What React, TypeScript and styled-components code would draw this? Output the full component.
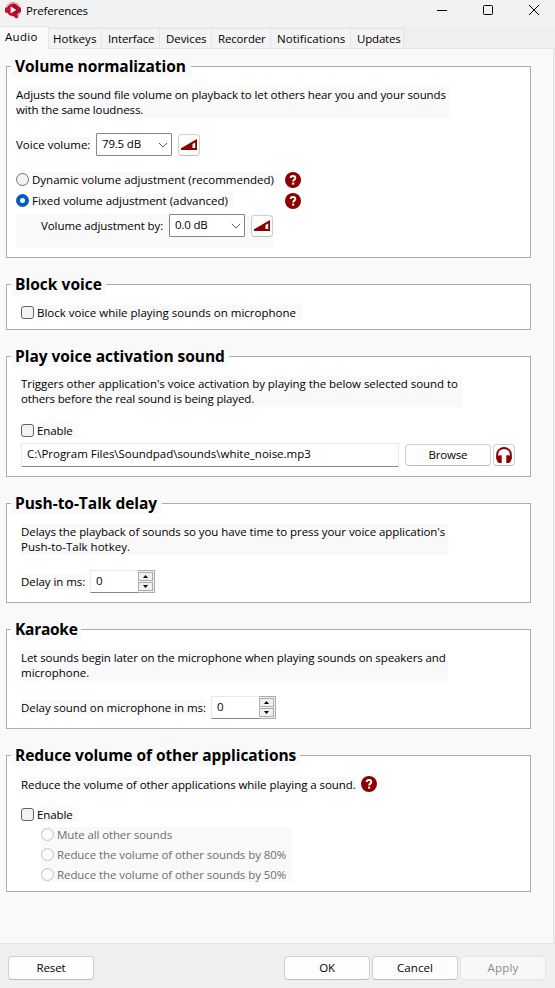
import React from 'react';
import styled, { createGlobalStyle } from 'styled-components';

const Global = createGlobalStyle`
  * { box-sizing: border-box; }
  body {
    margin: 0;
    background: #efefef;
    color: #000;
    font: 11.5px/15px "Open Sans", "Noto Sans", sans-serif;
  }
  button, input { font: inherit; color: inherit; }
`;

const Window = styled.div`
  display: flex;
  flex-direction: column;
  width: 555px;
  height: 988px;
  background: #efefef;
  overflow: hidden;
`;

const TitleBar = styled.header`
  display: flex;
  align-items: flex-start;
  height: 26px;
  padding: 2px 0 0 5px;
  background: #f2f2f2;
`;

const WindowTitle = styled.span`
  flex: 1;
  margin: 1px 0 0 5px;
  letter-spacing: -0.2px;
`;

const CaptionIcon = styled.svg`
  display: block;
  width: 12px;
  height: 12px;
  margin: 2px 15px 0 19px;
  fill: none;
  stroke: #000;
`;

const TabBar = styled.nav`
  display: flex;
  align-items: flex-end;
  height: 22px;
`;

const Tab = styled.div<{ $width: number; $active?: boolean; $spacing?: number }>`
  position: relative;
  width: ${(p) => p.$width}px;
  height: ${(p) => (p.$active ? 23 : 20)}px;
  margin-bottom: ${(p) => (p.$active ? -1 : 0)}px;
  padding: 2px 0 0 5px;
  border: solid #e5e5e5;
  border-width: ${(p) => (p.$active ? '1px 0 0 0' : '1px 1px 0 0')};
  background: ${(p) => (p.$active ? '#f9f9f9' : '#f3f3f3')};
  letter-spacing: ${(p) => p.$spacing ?? 0}px;
  white-space: nowrap;
  &:nth-child(2) { border-left-width: 1px; padding-left: 4px; }
  &:nth-child(n + 3) { padding-left: 6px; }
`;

const TabPage = styled.main`
  display: flex;
  flex-direction: column;
  gap: 26px;
  height: 896px;
  margin-right: 1px;
  padding: 17px 0 0 6px;
  border: solid #e3e3e3;
  border-width: 1px 1px 1px 0;
  background: #f9f9f9;
`;

const Group = styled.section<{ $height: number; $inset?: number }>`
  flex: none;
  width: 525px;
  height: ${(p) => p.$height}px;
  padding-left: ${(p) => p.$inset ?? 14}px;
  border: 1px solid #acacac;
  background: #fff;
`;

const Heading = styled.h2<{ $width: number; $inset?: number; $spacing?: number }>`
  width: ${(p) => p.$width}px;
  height: 17px;
  margin: -7px 0 0 ${(p) => 4 - (p.$inset ?? 14)}px;
  padding-left: 4px;
  background: #f9f9f9;
  font-size: 15.5px;
  line-height: 13px;
  font-weight: 700;
  letter-spacing: ${(p) => p.$spacing ?? -0.03}px;
  white-space: nowrap;
`;

const Row = styled.div<{ $top?: number; $height?: number }>`
  display: flex;
  align-items: center;
  height: ${(p) => p.$height ?? 15}px;
  margin-top: ${(p) => p.$top ?? 0}px;
`;

const Label = styled.span<{ $spacing?: number; $width?: number; $disabled?: boolean }>`
  flex: none;
  display: block;
  width: ${(p) => (p.$width ? `${p.$width}px` : 'auto')};
  background: #f9f9f9;
  color: ${(p) => (p.$disabled ? '#6d6d6d' : '#000')};
  letter-spacing: ${(p) => p.$spacing ?? 0}px;
  white-space: nowrap;
`;

const Note = styled.div<{ $top: number; $width: number }>`
  width: ${(p) => p.$width}px;
  height: 31px;
  margin-top: ${(p) => p.$top}px;
  background: #f9f9f9;
`;

const ComboBox = styled.div`
  display: flex;
  align-items: center;
  justify-content: space-between;
  flex: none;
  width: 76px;
  height: 23px;
  padding: 0 3px 2px 5px;
  border: 1px solid #868686;
  border-radius: 1px;
  background: #fff;
  letter-spacing: -0.19px;
`;

const Chevron = styled.svg`
  width: 10px;
  height: 6px;
  margin-top: 3px;
  fill: none;
  stroke: #5e5e5e;
`;

const IconButton = styled.button`
  display: flex;
  align-items: center;
  justify-content: center;
  flex: none;
  width: 22px;
  height: 22px;
  padding: 0;
  border: 1px solid #d0d0d0;
  border-bottom-color: #bcbcbc;
  border-radius: 4px;
  background: #fdfdfd;
`;

const PushButton = styled.button<{ $height?: number; $spacing?: number }>`
  flex: none;
  width: 86px;
  height: ${(p) => p.$height ?? 24}px;
  padding: 0 0 1px;
  border: 1px solid #d0d0d0;
  border-bottom-color: #bcbcbc;
  border-radius: 4px;
  background: #fdfdfd;
  letter-spacing: ${(p) => p.$spacing ?? -0.15}px;
  &:disabled {
    border-color: #e6e6e6;
    background: #f7f7f7;
    color: #8b8b8b;
  }
`;

const Radio = styled.span<{ $checked?: boolean; $disabled?: boolean }>`
  flex: none;
  width: 13px;
  height: 13px;
  margin-right: 3px;
  border: ${(p) => (p.$checked ? '4px solid #005fb8' : `1px solid ${p.$disabled ? '#c3c3c3' : '#707070'}`)};
  border-radius: 50%;
  background: ${(p) => (p.$checked ? '#fff' : p.$disabled ? '#fbfbfb' : '#f3f3f3')};
`;

const Check = styled.span`
  flex: none;
  width: 13px;
  height: 13px;
  margin-right: 3px;
  border: 1px solid #626262;
  border-radius: 3px;
  background: #f3f3f3;
`;

const Indented = styled.div<{ $width: number; $height: number; $top: number; $left?: number }>`
  width: ${(p) => p.$width}px;
  height: ${(p) => p.$height}px;
  margin: ${(p) => p.$top}px 0 0 ${(p) => p.$left ?? 0}px;
  background: #f9f9f9;
`;

const Gap = styled.span<{ $width: number }>`
  flex: none;
  width: ${(p) => p.$width}px;
`;

const PathField = styled.div`
  width: 378px;
  height: 24px;
  margin-right: 6px;
  padding: 2px 5px;
  border: 1px solid #e9e9e9;
  border-bottom-color: #868686;
  border-radius: 1px;
  background: #fff;
  letter-spacing: -0.02px;
`;

const SpinBox = styled.div`
  display: flex;
  width: 65px;
  height: 23px;
  background: #fff;
`;

const SpinValue = styled.span`
  width: 48px;
  padding: 2px 5px;
  border: 1px solid #e9e9e9;
  border-right: 0;
  border-bottom-color: #868686;
`;

const SpinArrows = styled.span`
  display: flex;
  flex-direction: column;
  justify-content: space-between;
  width: 17px;
  padding: 1px 1px 1px 0;
  border: 1px solid #acacac;
  border-left: 0;
  background: #f0f0f0;
`;

const SpinArrow = styled.svg`
  display: block;
  width: 15px;
  height: 9px;
  border: 1px solid #acacac;
  background: #f0f0f0;
`;

const Footer = styled.footer`
  display: flex;
  gap: 2px;
  padding: 12px 9px 0 8px;
`;

const Spacer = styled.span`
  flex: 1;
`;

const HelpSvg = styled.svg`
  flex: none;
  display: block;
  width: 16px;
  height: 16px;
`;

const HelpIcon = () => (
  <HelpSvg viewBox="0 0 16 16">
    <circle cx="8" cy="8" r="8" fill="#8b0000" />
    <path d="M5.7 6.1C5.7 4.7 6.600 4 8 4s2.300.8 2.300 2c0 1.600-2.100 1.700-2.100 3.400" fill="none" stroke="#fff" strokeWidth="2" />
    <rect x="7.1" y="10.6" width="2.1" height="2" fill="#fff" />
  </HelpSvg>
);

const VolumeIcon = () => (
  <svg width="16" height="11" viewBox="0 0 16 11">
    <path fill="#8b0000" fillRule="evenodd" d="M0 9.300 16 0V11H0ZM11.500 9H14.200V3.400L11.500 5Z" />
  </svg>
);

const HeadphonesIcon = () => (
  <svg width="16" height="16" viewBox="0 0 16 16">
    <path d="M1.200 12V7.400a6.800 6.400 0 0 1 13.600 0V12" fill="none" stroke="#8b0000" strokeWidth="2" />
    <path d="M.4 10.500C.4 8.600 3 8 5.700 8.200V16H3.600C1.400 15.600.4 13.500.4 10.500ZM15.600 10.500c0-1.900-2.600-2.500-5.300-2.300V16h2.100c2.200-.4 3.200-2.500 3.200-5.500Z" fill="#8b0000" />
  </svg>
);

const AppIcon = () => (
  <svg width="16" height="17" viewBox="0 0 16 17">
    <path d="M1 7C1.600 2.500 5 .4 8.300.5 12 .6 14.600 3 15 6.500" fill="none" stroke="#d98089" strokeWidth="1" />
    <circle cx="8" cy="7.900" r="6.300" fill="#c8102e" />
    <path d="M8 1.600A6.300 6.300 0 0 1 9 14.100Z" fill="#a50d25" />
    <rect x="0" y="5.500" width="3.200" height="5.500" rx="1.400" fill="#c8102e" />
    <rect x="13" y="5.200" width="3" height="5.600" rx="1.400" fill="#b00d27" />
    <path d="M14.600 10.500C14 13.500 12.500 14.800 10 15.400" fill="none" stroke="#b56069" />
    <path d="M8.500 14.200 12.500 12.800 13.200 15.700 11 16.300Z" fill="#bd1029" />
    <path d="M5.700 4.600 11.400 7.900 5.700 11.200Z" fill="#fff" />
  </svg>
);

const Combo = ({ value }: { value: string }) => (
  <ComboBox>
    {value}
    <Chevron viewBox="0 0 10 6"><path d="M.8.8 5 5 9.200.8" /></Chevron>
  </ComboBox>
);

const Spinner = ({ value }: { value: number }) => (
  <SpinBox>
    <SpinValue>{value}</SpinValue>
    <SpinArrows>
      <SpinArrow viewBox="0 0 13 7"><path d="M4 5 6.500 2 9 5Z" /></SpinArrow>
      <SpinArrow viewBox="0 0 13 7"><path d="M4 2 6.500 5 9 2Z" /></SpinArrow>
    </SpinArrows>
  </SpinBox>
);

const tabs: [string, number, number][] = [
  ['Audio', 48, 0.3],
  ['Hotkeys', 54, 0.02],
  ['Interface', 58, -0.15],
  ['Devices', 52, -0.06],
  ['Recorder', 59, -0.16],
  ['Notifications', 80, 0.05],
  ['Updates', 53, -0.19],
];

export default function App() {
  return (
    <Window>
      <Global />
      <TitleBar>
        <AppIcon />
        <WindowTitle>Preferences</WindowTitle>
        <CaptionIcon viewBox="0 0 12 12"><path d="M1 6.500H11" /></CaptionIcon>
        <CaptionIcon viewBox="0 0 12 12"><rect x="1.500" y="1.500" width="9" height="9" rx="1" /></CaptionIcon>
        <CaptionIcon viewBox="0 0 12 12"><path d="M1 1 11 11M11 1 1 11" /></CaptionIcon>
      </TitleBar>
      <TabBar>
        {tabs.map(([name, width, spacing], i) => (
          <Tab key={name} $width={width} $spacing={spacing} $active={i === 0}>{name}</Tab>
        ))}
      </TabBar>
      <TabPage>
        <Group $height={192} $inset={9}>
          <Heading $width={180} $inset={9} $spacing={-0.06}>Volume normalization</Heading>
          <Note $top={10} $width={433}>
            <Label $spacing={-0.084}>Adjusts the sound file volume on playback to let others hear you and your sounds</Label>
            <Label $spacing={-0.12}>with the same loudness.</Label>
          </Note>
          <Row $top={15} $height={23}>
            <Label $width={75}>Voice volume:</Label>
            <Gap $width={5} />
            <Combo value="79.5 dB" />
            <Gap $width={6} />
            <IconButton><VolumeIcon /></IconButton>
          </Row>
          <Row $top={13} $height={21}>
            <Radio />
            <Label $width={247} $spacing={-0.01}>Dynamic volume adjustment (recommended)</Label>
            <Gap $width={6} />
            <HelpIcon />
          </Row>
          <Row $height={21}>
            <Radio $checked />
            <Label $width={202} $spacing={-0.025}>Fixed volume adjustment (advanced)</Label>
            <Gap $width={51} />
            <HelpIcon />
          </Row>
          <Indented $width={258} $height={34} $top={3}>
            <Row $height={23}>
              <Gap $width={25} />
              <Label $width={122} $spacing={-0.08}>Volume adjustment by:</Label>
              <Gap $width={6} />
              <Combo value="0.0 dB" />
              <Gap $width={6} />
              <IconButton><VolumeIcon /></IconButton>
            </Row>
          </Indented>
        </Group>

        <Group $height={46}>
          <Heading $width={95} $spacing={0.03}>Block voice</Heading>
          <Row $top={10}>
            <Check />
            <Label $width={265}>Block voice while playing sounds on microphone</Label>
          </Row>
        </Group>

        <Group $height={121}>
          <Heading $width={218}>Play voice activation sound</Heading>
          <Note $top={9} $width={441}>
            <Label $spacing={-0.058}>Triggers other application's voice activation by playing the below selected sound to</Label>
            <Label $spacing={-0.14}>others before the real sound is being played.</Label>
          </Note>
          <Row $top={16}>
            <Check />
            <Label $width={41} $spacing={-0.1}>Enable</Label>
          </Row>
          <Row $top={5} $height={24}>
            <PathField>C:\Program Files\Soundpad\sounds\white_noise.mp3</PathField>
            <PushButton $height={22} $spacing={-0.18}>Browse</PushButton>
            <Gap $width={2} />
            <IconButton><HeadphonesIcon /></IconButton>
          </Row>
        </Group>

        <Group $height={100}>
          <Heading $width={151}>Push-to-Talk delay</Heading>
          <Note $top={10} $width={427}>
            <Label $spacing={-0.07}>Delays the playback of sounds so you have time to press your voice application's</Label>
            <Label>Push-to-Talk hotkey.</Label>
          </Note>
          <Row $top={15} $height={23}>
            <Label $width={64} $spacing={-0.07}>Delay in ms:</Label>
            <Gap $width={5} />
            <Spinner value={0} />
          </Row>
        </Group>

        <Group $height={100}>
          <Heading $width={70} $spacing={-0.26}>Karaoke</Heading>
          <Note $top={10} $width={427}>
            <Label $spacing={-0.092}>Let sounds begin later on the microphone when playing sounds on speakers and</Label>
            <Label>microphone.</Label>
          </Note>
          <Row $top={15} $height={23}>
            <Label $width={185} $spacing={-0.05}>Delay sound on microphone in ms:</Label>
            <Gap $width={5} />
            <Spinner value={0} />
          </Row>
        </Group>

        <Group $height={137}>
          <Heading $width={289} $spacing={-0.06}>Reduce volume of other applications</Heading>
          <Row $top={10} $height={16}>
            <Label $width={335} $spacing={-0.05}>Reduce the volume of other applications while playing a sound.</Label>
            <Gap $width={5} />
            <HelpIcon />
          </Row>
          <Row $top={15}>
            <Check />
            <Label $width={41} $spacing={-0.1}>Enable</Label>
          </Row>
          <Indented $width={251} $height={55} $top={5} $left={20}>
            <Row><Radio $disabled /><Label $disabled $spacing={-0.11}>Mute all other sounds</Label></Row>
            <Row $top={5}><Radio $disabled /><Label $disabled $spacing={-0.08}>Reduce the volume of other sounds by 80%</Label></Row>
            <Row $top={5}><Radio $disabled /><Label $disabled $spacing={-0.08}>Reduce the volume of other sounds by 50%</Label></Row>
          </Indented>
        </Group>
      </TabPage>
      <Footer>
        <PushButton>Reset</PushButton>
        <Spacer />
        <PushButton>OK</PushButton>
        <PushButton $spacing={0.1}>Cancel</PushButton>
        <PushButton $spacing={0.2} disabled>Apply</PushButton>
      </Footer>
    </Window>
  );
}
